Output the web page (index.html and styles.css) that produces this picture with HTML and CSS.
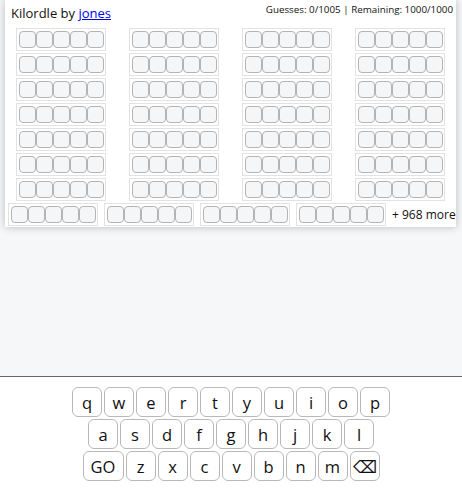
FILE: index.html
```html
<!DOCTYPE html>
<html lang="en">
<head>
    <meta charset="UTF-8">
    <meta name="viewport" content="width=device-width, initial-scale=1.0">
    <title>Kilordle</title>
    <link rel="stylesheet" href="styles.css">
</head>
<body>

    <div class="panel">
        <div class="header">
            <span class="title">Kilordle by <a href="#">jones</a></span>
            <span class="stats">Guesses: 0/1005 | Remaining: 1000/1000</span>
        </div>
        <div class="boards" id="boards"></div>
        <div class="extra" id="extra">
            <span class="more">+ 968 more</span>
        </div>
    </div>

    <div class="keyboard">
        <div class="key-row">
            <button class="key">q</button><button class="key">w</button><button class="key">e</button><button class="key">r</button><button class="key">t</button><button class="key">y</button><button class="key">u</button><button class="key">i</button><button class="key">o</button><button class="key">p</button>
        </div>
        <div class="key-row">
            <button class="key">a</button><button class="key">s</button><button class="key">d</button><button class="key">f</button><button class="key">g</button><button class="key">h</button><button class="key">j</button><button class="key">k</button><button class="key">l</button>
        </div>
        <div class="key-row">
            <button class="key wide">GO</button><button class="key">z</button><button class="key">x</button><button class="key">c</button><button class="key">v</button><button class="key">b</button><button class="key">n</button><button class="key">m</button><button class="key">&#9003;</button>
        </div>
    </div>

    <script>
        function makeBoard() {
            let board = document.createElement("div");
            board.className = "board";
            for (let i = 0; i < 5; i++) {
                let tile = document.createElement("div");
                tile.className = "tile";
                board.appendChild(tile);
            }
            return board;
        }

        let boards = document.getElementById("boards");
        for (let i = 0; i < 28; i++) {
            boards.appendChild(makeBoard());
        }

        let extra = document.getElementById("extra");
        let more = extra.querySelector(".more");
        for (let i = 0; i < 4; i++) {
            extra.insertBefore(makeBoard(), more);
        }
    </script>

</body>
</html>
```

FILE: styles.css
```css
body {
    margin: 0;
    min-height: 100vh;
    display: flex;
    flex-direction: column;
    background-color: #f6f7f8;
    font-family: "Open Sans", sans-serif;
    color: #111;
}
.panel {
    margin: 0 6px 0 5px;
    background: white;
    box-shadow: 0px 0px 8px rgba(0, 0, 0, 0.25);
    padding: 0 0 1px;
}
.header {
    display: flex;
    justify-content: space-between;
    align-items: flex-start;
    height: 28px;
    padding: 0 3px 0 6px;
}
.title {
    font-size: 13px;
    margin-top: 4px;
}
.title a {
    color: #0000ee;
}
.stats {
    font-size: 9.8px;
    margin-top: 3px;
}
.boards {
    display: grid;
    grid-template-columns: repeat(4, auto);
    justify-content: space-around;
    row-gap: 2px;
}
.board {
    display: flex;
    border: 1px solid #e2e2e2;
    padding: 2px 1px 2px 2px;
}
.tile {
    width: 15px;
    height: 15px;
    border: 1px solid #b4b4b4;
    border-radius: 4px;
    background: #f5f6f8;
}
.extra {
    display: flex;
    align-items: center;
    gap: 6px;
    margin: 2px 0 0 3px;
}
.more {
    font-size: 12px;
    white-space: nowrap;
}
.keyboard {
    margin-top: auto;
    background: white;
    border-top: 1px solid #666;
    padding: 10px 0 8px;
}
.key-row {
    display: flex;
    justify-content: center;
    gap: 2px;
    margin-bottom: 2px;
}
.key-row:last-child {
    margin-bottom: 0;
}
.key {
    width: 30px;
    height: 30px;
    padding: 0;
    background: white;
    border: 1px solid #b8b8b8;
    border-radius: 6px;
    font-family: "Open Sans", sans-serif;
    font-size: 16.5px;
    color: #111;
}
.key.wide {
    width: 41px;
}
```
